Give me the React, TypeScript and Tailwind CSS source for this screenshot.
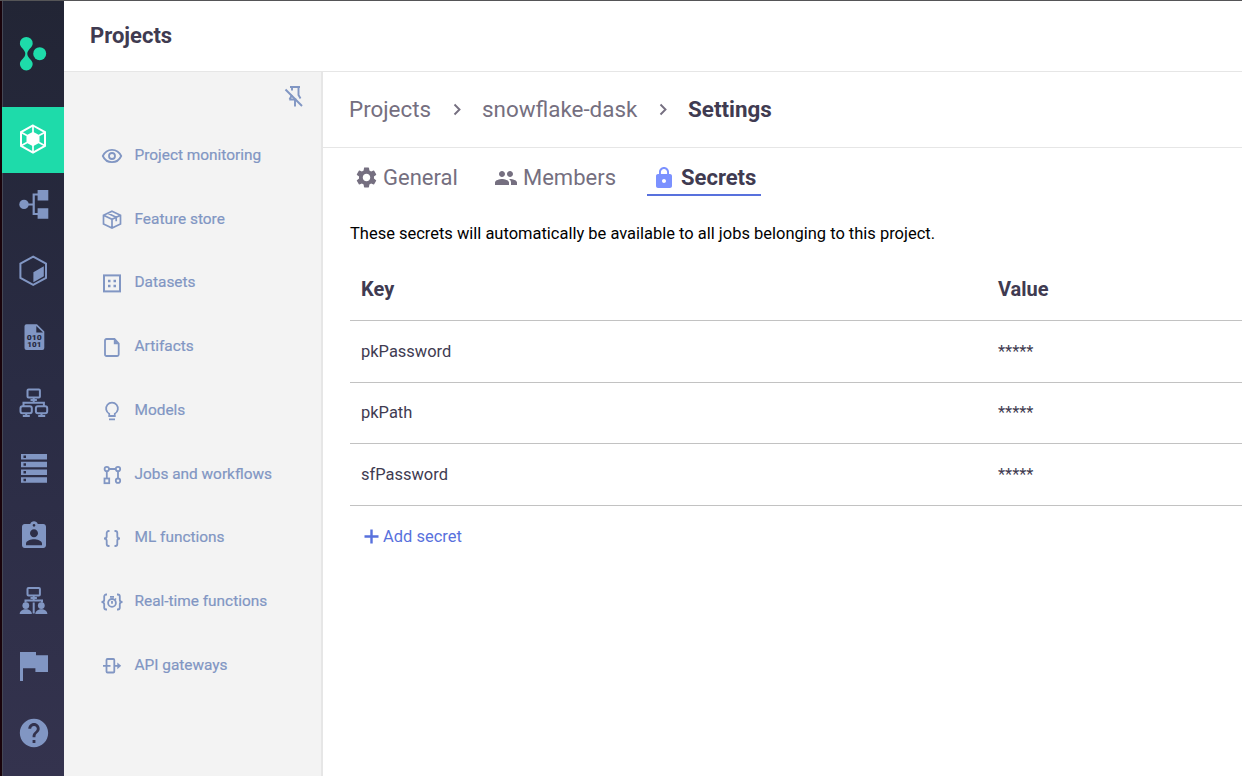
import type { ReactNode } from "react";
import { MdAssignmentInd, MdHelp, MdLock, MdPeople, MdSettings } from "react-icons/md";

function RailIcon({ children }: { children: ReactNode }) {
  return (
    <svg width="32" height="32" viewBox="0 0 32 32" fill="none" stroke="currentColor" strokeWidth="2">
      {children}
    </svg>
  );
}

const monitor = (
  <>
    <rect x="10.5" y="2.4" width="12.4" height="8" rx="1" />
    <path d="M16.7 10.5v5M13.5 13h6.4M6.5 19v-3.2h20.4V19" />
  </>
);

const railItems: ReactNode[] = [
  <RailIcon>
    <path d="M16 1.500 28 8.200v13.600L16 28.500 4 21.800V8.200Z" />
    <path d="M16 1.500V9M28 8.200l-6 3.400M28 21.800l-6-3.400M16 28.500V21M4 21.800l6-3.400M4 8.200l6 3.400" strokeWidth="1.700" />
    <path d="m16 7.700 6.500 3.600v7.400L16 22.300l-6.500-3.600v-7.400Z" fill="currentColor" stroke="none" />
  </RailIcon>,
  <RailIcon>
    <path d="M7 15.500h9.500M21 5.500h-4.300v19.500H21" strokeWidth="2.200" />
    <circle cx="7" cy="15.400" r="4.700" fill="currentColor" stroke="none" />
    <path d="M20.600 1h10.700v10.500H20.600ZM20.600 19.300h10.700v10.500H20.600Z" fill="currentColor" stroke="none" />
  </RailIcon>,
  <RailIcon>
    <path d="M16.200 1.600 29 8.600v14.200l-12.800 7-12.800-7V8.600Z" />
    <path d="M16.400 17.300 26.800 11.300v10L16.400 27.200Z" fill="currentColor" stroke="none" />
  </RailIcon>,
  <RailIcon>
    <path d="M9.500 3.200H20l7.300 7.400V27a2 2 0 0 1-2 2H9.500a2 2 0 0 1-2-2V5.200a2 2 0 0 1 2-2Z" fill="currentColor" stroke="none" />
    <path d="M19.300 5v6.500h6.700" fill="#282b41" stroke="none" />
    <g fill="#282b41" stroke="none" fontFamily="Roboto, sans-serif" fontWeight="900" fontSize="7.800" textAnchor="middle">
      <text x="17.300" y="19" textLength="15" lengthAdjust="spacingAndGlyphs">010</text>
      <text x="17.300" y="26.200" textLength="14" lengthAdjust="spacingAndGlyphs">101</text>
    </g>
  </RailIcon>,
  <RailIcon>
    {monitor}
    <rect x="3.500" y="19.200" width="11.300" height="7" rx="2" />
    <rect x="18.900" y="19.200" width="11.300" height="7" rx="2" />
    <path d="M9.200 26v3.200M5.800 29h7M24.500 26v3.200M21.200 29h7" />
  </RailIcon>,
  <RailIcon>
    <g fill="currentColor" stroke="none">
      <path d="M4 1h26v5.500H4ZM4 8.800h26v5.500H4ZM4 16.500h26V22H4ZM4 24.300h26v5.500H4Z" />
    </g>
    <g fill="#2c2d46" stroke="none">
      <path d="M6.500 2.500H9V5H6.500ZM6.500 10.300H9v2.500H6.500ZM6.500 18H9v2.500H6.500ZM6.500 25.800H9v2.500H6.500Z" />
    </g>
  </RailIcon>,
  <MdAssignmentInd size={32} className="mt-0.5 ml-0.5" />,
  <RailIcon>
    <rect x="10.500" y="3" width="12.400" height="7.500" rx="1" />
    <path d="M16.700 10.600v5M13.500 13h6.400M8.500 17.600v-2.200h16.500v2.200M16.700 17.600v11" />
    <g fill="currentColor" stroke="none">
      <circle cx="8.800" cy="20.600" r="3.400" />
      <circle cx="24.300" cy="20.600" r="3.400" />
      <path d="M2.700 29c0-3 3-4.700 6.200-4.700 3.100 0 6 1.700 6 4.700ZM18.300 29c0-3 3-4.700 6.100-4.700s6 1.700 6 4.700Z" />
    </g>
  </RailIcon>,
  <RailIcon>
    <path d="M3 1h16v3.200h12V21H18.400v-3.700H6V30H3Z" fill="currentColor" stroke="none" />
  </RailIcon>,
  <MdHelp size={34} className="ml-0.5" />,
];

function MenuIcon({ children }: { children: ReactNode }) {
  return (
    <svg width="24" height="24" viewBox="0 0 24 24" fill="none" stroke="currentColor" strokeWidth="1.800" className="shrink-0">
      {children}
    </svg>
  );
}

const menuItems: { label: string; icon: ReactNode }[] = [
  {
    label: "Project monitoring",
    icon: (
      <MenuIcon>
        <path d="M2.800 12c1.800-3.900 5.200-6.200 9.200-6.200s7.400 2.300 9.200 6.200c-1.800 3.900-5.200 6.200-9.200 6.200S4.600 15.900 2.800 12Z" />
        <circle cx="12" cy="12" r="3" />
      </MenuIcon>
    ),
  },
  {
    label: "Feature store",
    icon: (
      <MenuIcon>
        <path d="m12 3.200 8.500 4v8.700L12 20l-8.500-4.100V7.200ZM3.500 7.200l8.500 4.100 8.500-4.100M12 11.300V20M7.800 5.200l8.400 4.100v4" strokeWidth="1.700" />
      </MenuIcon>
    ),
  },
  {
    label: "Datasets",
    icon: (
      <MenuIcon>
        <rect x="4" y="3.400" width="16" height="16" strokeWidth="2" />
        <path d="M8 7.700h2.500v2.500H8ZM13.500 7.700H16v2.500h-2.500ZM8 12.700h2.500v2.500H8ZM13.500 12.700H16v2.500h-2.500Z" fill="currentColor" stroke="none" />
      </MenuIcon>
    ),
  },
  {
    label: "Artifacts",
    icon: (
      <MenuIcon>
        <path d="M6.500 3h8l4.200 4.500v11a1.500 1.500 0 0 1-1.500 1.500H6.500A1.500 1.500 0 0 1 5 18.500v-14A1.500 1.500 0 0 1 6.500 3Z" />
        <path d="M13.800 3v5.200h5Z" fill="currentColor" stroke="none" />
      </MenuIcon>
    ),
  },
  {
    label: "Models",
    icon: (
      <MenuIcon>
        <path d="M9.200 17v-2.300a5.900 5.900 0 1 1 5.600 0V17ZM9 20.300h6" />
      </MenuIcon>
    ),
  },
  {
    label: "Jobs and workflows",
    icon: (
      <MenuIcon>
        <circle cx="6.800" cy="6" r="2.200" />
        <circle cx="18" cy="6" r="2.200" />
        <circle cx="18" cy="17.700" r="2.200" />
        <rect x="4.500" y="15.500" width="4.700" height="4.700" />
        <path d="M9 6h6.800M6.800 8.300v7M18 8.300v7.200" />
      </MenuIcon>
    ),
  },
  {
    label: "ML functions",
    icon: (
      <MenuIcon>
        <path d="M9.500 4h-.8a2 2 0 0 0-2 2v3.200q0 2.300-2.700 2.300 2.700 0 2.700 2.300V17a2 2 0 0 0 2 2h.8M14.500 4h.8a2 2 0 0 1 2 2v3.200q0 2.300 2.700 2.300-2.700 0-2.700 2.300V17a2 2 0 0 1-2 2h-.8" />
      </MenuIcon>
    ),
  },
  {
    label: "Real-time functions",
    icon: (
      <MenuIcon>
        <path d="M7 3.500h-.8a2 2 0 0 0-2 2v3.200q0 2.300-2.700 2.300 2.700 0 2.700 2.300v3.200a2 2 0 0 0 2 2H7M17 3.500h.8a2 2 0 0 1 2 2v3.200q0 2.300 2.700 2.300-2.700 0-2.700 2.300v3.200a2 2 0 0 1-2 2H17" />
        <circle cx="12" cy="11.900" r="3.900" />
        <path d="M10 5.900h4M12 10v2.700M15 7.700l1 1" />
      </MenuIcon>
    ),
  },
  {
    label: "API gateways",
    icon: (
      <MenuIcon>
        <rect x="6.500" y="5" width="7.800" height="13.500" rx="1" />
        <path d="M3 11.800h7.500M14 11.800h5" />
        <path d="m17.300 8.400 3.900 3.400-3.900 3.400Z" fill="currentColor" stroke="none" />
      </MenuIcon>
    ),
  },
];

const secrets = [
  { key: "pkPassword", value: "*****" },
  { key: "pkPath", value: "*****" },
  { key: "sfPassword", value: "*****" },
];

function Chevron() {
  return (
    <svg width="10" height="14" viewBox="0 0 10 14" fill="none" stroke="#756f80" strokeWidth="1.900" className="shrink-0">
      <path d="m2.500 2.500 5 5-5 5" />
    </svg>
  );
}

function Rail() {
  return (
    <nav className="flex w-[64px] shrink-0 flex-col border-l-2 border-[#18030b] bg-linear-to-b from-[#222535] via-[#2a2c44] to-[#34334e] text-[#8196c3]">
      <div className="flex h-[106px] shrink-0 items-center border-l border-[#454754] pl-[14px]">
        <svg width="32" height="40" viewBox="0 0 32 40" fill="#1edbaa">
          <path d="M9.300 3a6.400 6.400 0 0 1 6.400 6.400c0 4.200-5.400 6-5.400 10.400s5.400 6 5.400 10.300a6.400 6.400 0 0 1-12.800 0c0-4.300 5.400-5.800 5.400-10.300S2.900 13.600 2.900 9.400A6.400 6.400 0 0 1 9.300 3Z" />
          <circle cx="22.700" cy="19.700" r="6.500" />
        </svg>
      </div>
      {railItems.map((icon, i) => (
        <div
          key={i}
          className={
            i === 0
              ? "flex h-[66px] shrink-0 items-center justify-center bg-[#1edbaa] pb-px text-white"
              : "flex h-[66px] shrink-0 items-center justify-center border-l border-[#454754] pb-[3px] pr-px"
          }
        >
          {icon}
        </div>
      ))}
      <div className="grow border-l border-[#454754]" />
    </nav>
  );
}

function ProjectMenu() {
  return (
    <aside className="flex w-[259px] shrink-0 flex-col border-r-2 border-[#e6e6e6] bg-[#f3f3f3] text-[#8196c3]">
      <div className="flex h-[51px] shrink-0 justify-end pr-[14px] pt-3">
        <svg width="24" height="26" viewBox="0 0 24 26" fill="none" stroke="currentColor" strokeWidth="1.900">
          <path d="M7 3h10M9 3.500v3M15.500 3.500v7.500l2 3.500M6.300 15.500h7M9 11l-2.500 4.500M12 15v7.500" />
          <path d="m2.500 5.500 16.500 16.500" />
        </svg>
      </div>
      {menuItems.map((item) => (
        <a key={item.label} className="flex h-[63.750px] shrink-0 items-center gap-[10.500px] pl-9 text-[15.400px] leading-5 [-webkit-text-stroke:0.2px_#8196c3]">
          <span className="pt-[3px]">{item.icon}</span>
          <span>{item.label}</span>
        </a>
      ))}
    </aside>
  );
}

export default function App() {
  return (
    <div className="flex h-[776px] w-full overflow-hidden border-t border-[#555557] bg-white font-[Roboto,sans-serif] text-[#403b51]">
      <Rail />
      <div className="flex min-w-0 grow flex-col">
        <header className="flex h-[71px] shrink-0 items-center border-b border-[#e6e6e6] pl-[26px]">
          <h1 className="text-[22px] font-bold leading-7">Projects</h1>
        </header>
        <div className="flex min-h-0 grow">
          <ProjectMenu />
          <main className="flex min-w-0 grow flex-col">
            <div className="flex h-[76px] shrink-0 items-center border-b border-[#e6e6e6] pb-0.5 pl-[26px] text-[22.400px] leading-7 text-[#756f80]">
              <span className="w-[103px]">Projects</span>
              <Chevron />
              <span className="ml-5 w-[176px]">snowflake-dask</span>
              <Chevron />
              <span className="ml-5 font-bold text-[#403b51]">Settings</span>
            </div>
            <div className="flex h-12 shrink-0 pl-[31px] text-[22px] leading-7 text-[#756f80]">
              <div className="flex w-[140px] items-center gap-1 pt-3">
                <MdSettings size={25} className="mb-0.5 shrink-0" />
                <span>General</span>
              </div>
              <div className="flex w-[153px] items-center gap-[5px] pt-3">
                <MdPeople size={24} className="mb-px shrink-0" />
                Members
              </div>
              <div className="flex h-12 w-[114px] items-center gap-[5px] border-b-2 border-[#5871dd] pl-[5px] pt-[14px] font-bold text-[#403b51]">
                <MdLock size={24} className="mb-px shrink-0 text-[#7b91ff]" />
                Secrets
              </div>
            </div>
            <p className="mt-[28px] pl-[27px] text-[16.480px] leading-5 text-black">
              These secrets will automatically be available to all jobs belonging to this project.
            </p>
            <table className="ml-[27px] mt-[14px] table-fixed border-collapse text-left text-[16.480px]">
              <thead>
                <tr className="h-[62px] border-b border-[#c2c2c2] text-[20px]">
                  <th className="w-[637px] pl-[11px] font-bold">Key</th>
                  <th className="pl-[11px] font-bold">Value</th>
                </tr>
              </thead>
              <tbody>
                {secrets.map((s, i) => (
                  <tr key={s.key} className={i === 1 ? "h-[61px] border-b border-[#c2c2c2]" : "h-[62px] border-b border-[#c2c2c2]"}>
                    <td className="pl-[11px] pt-0.5">{s.key}</td>
                    <td className="pl-[11px] pt-0.5">{s.value}</td>
                  </tr>
                ))}
              </tbody>
            </table>
            <button className="ml-[41px] mt-[19px] flex items-center gap-1 text-[16.480px] leading-6 text-[#5871dd]">
              <svg width="15" height="16" viewBox="0 0 15 16" fill="none" stroke="currentColor" strokeWidth="2.400">
                <path d="M.5 7.500h14M7.500.5v14" />
              </svg>
              Add secret
            </button>
          </main>
        </div>
      </div>
    </div>
  );
}
